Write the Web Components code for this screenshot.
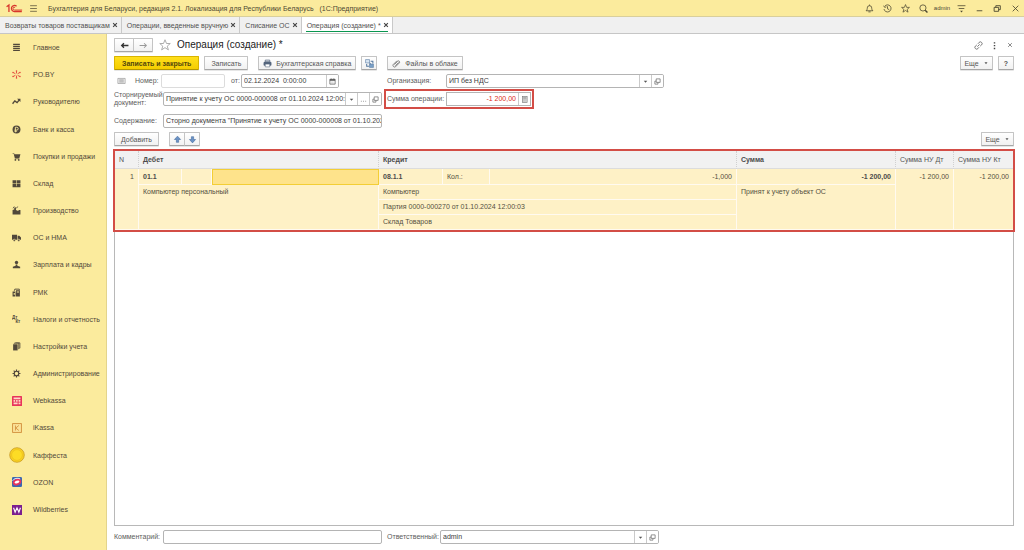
<!DOCTYPE html>
<html lang="ru">
<head>
<meta charset="utf-8">
<title>Операция (создание)</title>
<style>
html, body { margin: 0; height: 100%; }
body { font: 7px/9px "Liberation Sans", Arial, sans-serif; color: #444; background: #fff; }
</style>
</head>
<body>
<accounting-app></accounting-app>
<script>
const ICONS = {
  menu: '<path d="M2 3h12M2 8h12M2 13h12" stroke="#5d563c" stroke-width="1.4"/>',
  bell: '<path d="M2 12h12c-2-2-2-3-2-5a4 4 0 0 0-8 0c0 2 0 3-2 5zM6 14h4M8 1v2" fill="none" stroke="#4c4731" stroke-width="1.4"/>',
  history: '<path d="M3 4a6.3 6.3 0 1 1-1.200 5M1 3l2 3 3-1M8 4v4.500l3 1.500" fill="none" stroke="#4c4731" stroke-width="1.400"/>',
  star: '<path d="M8 1l2 5h5l-4 3.500 1.500 5L8 11.500 3.500 14.500 5 9.500 1 6h5z" fill="none" stroke="currentColor" stroke-width="1.300"/>',
  search: '<circle cx="7" cy="7" r="5.500" fill="none" stroke="#4c4731" stroke-width="1.400"/><path d="M11 11l4 4" stroke="#4c4731" stroke-width="2.400"/>',
  filter: '<path d="M1 3h14M3 8h10" stroke="#4c4731" stroke-width="1.400"/><path d="M5.500 12h5L8 15z" fill="#4c4731"/>',
  minimize: '<path d="M3 12h10" stroke="#4c4731" stroke-width="1.600"/>',
  restore: '<path d="M2 6h8v7H2zM5 6V3h8v7h-3" fill="none" stroke="#4c4731" stroke-width="1.600"/>',
  close: '<path d="M3 3l10 10M13 3L3 13" stroke="#4c4731" stroke-width="1.500"/>',
  tabclose: '<path d="M3 3l10 10M13 3L3 13" stroke="#444" stroke-width="3"/>',
  formclose: '<path d="M3 3l10 10M13 3L3 13" stroke="#666" stroke-width="2"/>',
  logo: '<g fill="none" stroke="#d8352c" stroke-width="2.200"><path d="M1 6l4-3v12"/><path d="M18 5a5.200 5.200 0 1 0-3 9h12"/><path d="M15.500 7a2.400 2.400 0 1 0-1 4.500h13" stroke-width="1.600"/></g>',
  main: '<path d="M2 2.500h12M2 6h12M2 9.500h12M2 13h12" stroke="#51483a" stroke-width="2"/>',
  snow: '<g stroke="#e2473b" stroke-width="1.600"><path d="M8 2v4M8 10v4M2 4.500l4 2M10 9.500l4 2M2 11.500l4-2M10 6.500l4-2"/></g><g fill="#e2473b"><circle cx="8" cy="1.800" r="1.300"/><circle cx="8" cy="14.200" r="1.300"/><circle cx="1.800" cy="4.500" r="1.300"/><circle cx="14.200" cy="4.500" r="1.300"/><circle cx="1.800" cy="11.500" r="1.300"/><circle cx="14.200" cy="11.500" r="1.300"/></g>',
  trend: '<path d="M1 12l4-5 4 3 4-5" fill="none" stroke="#51483a" stroke-width="2.400"/><path d="M9 3h6v6z" fill="#51483a"/>',
  bank: '<circle cx="8" cy="8" r="7" fill="#51483a"/><path d="M6 13V4h2.500a2.500 2.500 0 0 1 0 5H4.500M4.500 11H9" fill="none" stroke="#fbeb9d" stroke-width="1.600"/>',
  cart: '<path d="M1 2h3v2h11l-2 7H5L3 3H1z" fill="#51483a"/><path d="M5 12h8" stroke="#51483a"/><circle cx="6" cy="14" r="1.500" fill="#51483a"/><circle cx="12" cy="14" r="1.500" fill="#51483a"/>',
  store: '<path d="M1 2h6.500v5H1zM8.500 2H15v5H8.500zM1 8h6.500v5H1zM8.500 8H15v5H8.500zM1 13h14v1.500H1z" fill="#51483a"/>',
  factory: '<path d="M1 15V7l3-1V3l3-1v5l4 2 1-2h3v8z" fill="#51483a"/><path d="M2 4l2-3M8 4l2-3" stroke="#51483a" stroke-width="1.600"/>',
  truck: '<path d="M0 3h9v9H0zM10 5h3l3 3v4h-6z" fill="#51483a"/><circle cx="4" cy="13" r="2" fill="#51483a" stroke="#fbeb9d"/><circle cx="12" cy="13" r="2" fill="#51483a" stroke="#fbeb9d"/>',
  person: '<circle cx="8" cy="4.500" r="3" fill="#51483a"/><path d="M6.500 8h3v2l5 2v2.500h-13V12l5-2z" fill="#51483a"/>',
  pos: '<path d="M1 6h5v9H1zM7 4h7v11H7z" fill="#51483a"/><path d="M4 5l1-3h8v2" fill="none" stroke="#51483a" stroke-width="1.600"/><path d="M8.500 6h4v2h-4zM3 9h2v3H3z" fill="#fbeb9d"/>',
  books: '<path d="M2 4h8v11H2z" fill="#51483a"/><path d="M4 3V2h8v10h-1M6 1.500h8V11h-1" fill="none" stroke="#51483a" stroke-width="1.500"/>',
  gear: '<circle cx="8" cy="8" r="4" fill="none" stroke="#51483a" stroke-width="2"/><path d="M8 1v3M8 12v3M1 8h3M12 8h3M3 3l2 2M11 11l2 2M13 3l-2 2M5 11l-2 2" stroke="#51483a" stroke-width="2"/>',
  dtkt: '<text x="0" y="7" font-size="8" font-weight="bold" fill="#51483a">Дт</text><text x="6" y="15" font-size="8" font-weight="bold" fill="#51483a">Кт</text>',
  webkassa: '<rect width="16" height="16" rx="1" fill="#e8345a"/><path d="M2.500 2.500h11v2.500h-11zM2.500 6.500h2.500V9H2.500zM6.500 6.500H9V9H6.500zM10.500 6.500h3V9h-3zM2.500 10.500H9V13H2.500zM10.500 10.500h3V13h-3z" fill="#ffd9c4"/>',
  ikassa: '<rect x="1" y="1" width="14" height="14" fill="#fbe39a" stroke="#cf8a35" stroke-width="1.400"/><path d="M5.500 4v8M11 4L6 8l5 4" fill="none" stroke="#cf8a35" stroke-width="1.300"/>',
  coin: '<circle cx="8" cy="8" r="7.300" fill="#f9d223" stroke="#c2921e" stroke-width=".7"/><circle cx="8" cy="8" r="5.400" fill="#fddc25" stroke="#eab81c" stroke-width=".6"/>',
  ozon: '<rect width="16" height="16" rx="2" fill="#3c67b0"/><ellipse cx="8" cy="8" rx="5.500" ry="3.600" fill="#fff" stroke="#e8345a" stroke-width="3" transform="rotate(-20 8 8)"/><path d="M1 6c2-4 8-5 12-3" fill="none" stroke="#fff" stroke-width="1.400"/>',
  wb: '<rect width="16" height="16" fill="#7b1f8f"/><path d="M2.500 4.500L5 11.500l3-7 3 7 2.500-7" fill="none" stroke="#fff" stroke-width="1.800"/>',
  back: '<path d="M15 8H3M7 4L3 8l4 4" fill="none" stroke="#333" stroke-width="2.400"/>',
  forward: '<path d="M1 8h12M9 4l4 4-4 4" fill="none" stroke="#999" stroke-width="1.800"/>',
  printer: '<path d="M4 2h8v3H4z" fill="#fff" stroke="#54657d" stroke-width="1.400"/><rect x="1" y="5" width="14" height="7" rx="2" fill="#54657d"/><path d="M4 9h8v5H4z" fill="#fff" stroke="#54657d"/>',
  struct: '<path d="M1 1h7v6H1z" fill="#d9e6f3" stroke="#54779e"/><path d="M8 9h7v6H8z" fill="#7aa0c8" stroke="#54779e"/><path d="M10 4h4v4M3 9v4h4M8 7l2 2" fill="none" stroke="#54779e" stroke-width="1.800"/>',
  clip: '<path d="M4 10l6-6a2 2 0 0 1 3 3l-7 7a3 3 0 0 1-4-4l7-7M6 12l6-6" fill="none" stroke="#777" stroke-width="1.600"/>',
  list: '<path d="M1.500 2.500h13v9h-13z" fill="#eee" stroke="#888"/><path d="M4 5h8M4 7h8M4 9h8" stroke="#888"/>',
  calendar: '<path d="M2 3h12v11H2z" fill="#fff" stroke="#555" stroke-width="1.600"/><path d="M2 4.500h12" stroke="#555" stroke-width="3"/><path d="M5 9h6M5 11.500h6" stroke="#888" stroke-dasharray="1.500 1"/><path d="M5 1v3M11 1v3" stroke="#555" stroke-width="1.600"/>',
  calc: '<rect x="3" y="1" width="11" height="14" fill="#ddd" stroke="#777" stroke-width="1.400"/><path d="M5 4.500h7" stroke="#777" stroke-width="2"/><path d="M5 8.500h7M5 11.500h7" stroke="#777" stroke-dasharray="1.500 1"/>',
  down: '<path d="M4 6h8l-4 5z" fill="#555"/>',
  dots: '<path d="M2 12h2M7 12h2M12 12h2" stroke="#666" stroke-width="1.600"/>',
  open: '<path d="M5 2h9v8H5z" fill="none" stroke="#666" stroke-width="1.600"/><path d="M5 7H2v7h7v-4" fill="none" stroke="#666" stroke-width="1.600"/>',
  up: '<path d="M8 2l5.500 6H10v5H6V8H2.500z" fill="#6b93c6" stroke="#41689c"/>',
  dn: '<path d="M8 14l5.500-6H10V3H6v5H2.500z" fill="#6b93c6" stroke="#41689c"/>',
  link: '<path d="M6 10l4-4M7 5l2-2.500a3 3 0 0 1 4.500 4.500L11 9M9 11l-2 2.500A3 3 0 0 1 2.500 9L5 7" fill="none" stroke="#666" stroke-width="1.500"/>',
  more: '<path d="M8 2v2.500M8 7v2.500M8 12v2.500" stroke="#444" stroke-width="2.600"/>'
};

function define(name, css, html) {
  const template = document.createElement('template');
  customElements.define(name, class extends HTMLElement {
    connectedCallback() {
      if (this.shadowRoot) return;
      const root = this.attachShadow({ mode: 'open' });
      template.innerHTML = `<style>*{box-sizing:border-box}button{font:inherit;color:inherit;margin:0;cursor:pointer}${css}</style>` +
        (typeof html === 'function' ? html(this) : html);
      root.append(template.content.cloneNode(true));
    }
  });
}

define('ui-icon',
  ':host{display:inline-flex;flex:none;width:var(--icon,9px);height:var(--icon,9px)}svg{width:100%;height:100%;display:block}:host([name=logo]){width:17px;height:10px}',
  el => `<svg viewBox="${el.getAttribute('name') === 'logo' ? '0 0 29 16' : '0 0 16 16'}" aria-hidden="true">${ICONS[el.getAttribute('name')]}</svg>`);

define('ui-button', `
  :host{display:inline-flex;flex:none;height:14px}
  button{display:flex;align-items:center;justify-content:center;gap:4px;width:100%;height:100%;padding:0 6px;
    border:1px solid #c4c4c4;border-bottom-color:#a6a6a6;border-radius:1px;background:linear-gradient(#fff,#f1f1f1);color:#555;white-space:nowrap;box-shadow:0 1px 0 #e6e6e6}
  :host([primary]) button{padding:0 7px;background:linear-gradient(#ffdf1c,#f5cd00);border-color:#d9b400;border-bottom-color:#b59700;color:#54480c;font-weight:bold}
  :host([withicon]) button{padding:0 4px}
  :host([square]) button{padding:0}`,
  el => `<button type="button" aria-label="${el.getAttribute('label') || el.textContent.trim()}"><slot></slot></button>`);

define('icon-button', `
  :host{display:inline-flex;flex:none}
  button{display:flex;align-items:center;justify-content:center;width:100%;padding:0;border:0;background:none}`,
  el => `<button type="button" aria-label="${el.getAttribute('label')}"><ui-icon name="${el.getAttribute('icon')}"></ui-icon></button>`);

define('ui-field', `
  :host{display:flex;align-items:center;min-width:0;height:14px}
  label{flex:none;width:var(--label,auto);line-height:8px;color:#5c5c5c}
  .box{display:flex;flex:1;min-width:0;height:14px;border:1px solid #b4b4b4;border-radius:2px;background:#fff;overflow:hidden}
  :host([muted]) .box{border-color:#dcdcdc}
  input{flex:1;min-width:0;width:0;height:11px;padding:0 0 0 2px;border:0;outline:0;background:none;font:inherit;line-height:11px;color:#3c3c3c}
  :host([money]) input{padding-right:2px;text-align:right;color:#dc2a20}
  button{flex:none;display:flex;align-items:center;justify-content:center;width:12px;padding:0;border:0;border-left:1px solid #cacaca;background:#fff;--icon:7px}
  :host([marked]){outline:2px solid #d34d46;outline-offset:1px}
  :host([marked]) .box{border-radius:0}`,
  el => `<label for="f">${el.getAttribute('label')}</label><div class="box"><input id="f" type="text" value="${(el.getAttribute('value') || '').replace(/"/g, '&quot;')}">${
    (el.getAttribute('tools') || '').split(' ').filter(Boolean).map(t => `<button type="button" aria-label="${t}"><ui-icon name="${t}"></ui-icon></button>`).join('')}</div>`);

define('top-bar', `
  :host{display:flex;align-items:center;height:17px;padding:0 0 0 6px;background:#fbeb9d;border-bottom:1px solid #d9cf9c;color:#4d4833}
  .menu{margin-left:6px}h1{margin:0 auto 0 10px;font:inherit;white-space:pre}
  .tools{display:flex;align-items:center}.tools icon-button{width:18px}.user{width:20px;text-align:center;font-size:6px;color:inherit;text-decoration:none}`,
  `<ui-icon name="logo"></ui-icon><icon-button class="menu" icon="menu" label="Меню"></icon-button>
   <h1>Бухгалтерия для Беларуси, редакция 2.1. Локализация для Республики Беларусь   (1С:Предприятие)</h1>
   <div class="tools"><icon-button icon="bell" label="Уведомления"></icon-button><icon-button icon="history" label="История"></icon-button><icon-button icon="star" label="Избранное"></icon-button><icon-button icon="search" label="Поиск"></icon-button><a class="user" href="#">admin</a><icon-button icon="filter" label="Сервис"></icon-button><icon-button icon="minimize" label="Свернуть"></icon-button><icon-button icon="restore" label="Развернуть"></icon-button><icon-button icon="close" label="Закрыть"></icon-button></div>`);

define('window-tab', `
  :host{display:flex;align-items:center;gap:2px;height:16px;padding:0 3px 0 5px;border-right:1px solid #c9c9c9;color:#505050;--icon:6px}
  a{color:inherit;text-decoration:none;white-space:nowrap}
  :host([active]){background:linear-gradient(#0a9650,#0a9650) 50% 14px/calc(100% - 8px) 1px no-repeat #fff}`,
  `<a href="#"><slot></slot></a><icon-button icon="tabclose" label="Закрыть вкладку"></icon-button>`);

define('tab-strip', ':host{display:flex;height:17px;background:#f0f0f0;border-bottom:1px solid #c6c6c6}',
  `<window-tab>Возвраты товаров поставщикам</window-tab><window-tab>Операции, введенные вручную</window-tab><window-tab>Списание ОС</window-tab><window-tab active>Операция (создание) *</window-tab>`);

define('nav-item', `
  :host{display:flex;flex:1}
  a{display:flex;flex:1;align-items:center;color:#51483a;text-decoration:none;white-space:nowrap}
  .pic{display:flex;justify-content:center;width:33px;flex:none}
  :host([icon=coin]){--icon:16px}
  :host([icon=webkassa]),:host([icon=ikassa]),:host([icon=ozon]),:host([icon=wb]){--icon:10px}`,
  el => `<a href="#"><span class="pic"><ui-icon name="${el.getAttribute('icon')}"></ui-icon></span><slot></slot></a>`);

define('side-nav', ':host{display:flex;background:#fbeb9d;border-right:1px solid #e3d48c}nav{display:flex;flex:1;flex-direction:column;padding-bottom:27px}',
  '<nav>' + [['main','Главное'],['snow','PO.BY'],['trend','Руководителю'],['bank','Банк и касса'],['cart','Покупки и продажи'],['store','Склад'],['factory','Производство'],['truck','ОС и НМА'],['person','Зарплата и кадры'],['pos','РМК'],['dtkt','Налоги и отчетность'],['books','Настройки учета'],['gear','Администрирование'],['webkassa','Webkassa'],['ikassa','iKassa'],['coin','Каффеста'],['ozon','OZON'],['wb','Wildberries']]
    .map(([i, t]) => `<nav-item icon="${i}">${t}</nav-item>`).join('') + '</nav>');

define('entry-table', `
  :host{display:block;flex:1;min-height:0;border:1px solid #b8b8b8;background:#fff}
  table{width:100%;table-layout:fixed;border-collapse:separate;border-spacing:0;outline:2px solid #d34d46;background:#fef1c6}
  th,td{padding:0 4px;text-align:left;vertical-align:top;white-space:nowrap;font-weight:normal;overflow:hidden}
  th{background:#f1f1f1;color:#555;border-right:1px dotted #d0d0d0;border-bottom:1px solid #dcdcdc;line-height:17px}
  th.b,td.b{font-weight:bold;color:#4b4b4b}
  td{border-right:1px solid #fffaf0;border-bottom:1px solid #fffaf0;color:#54503f;line-height:14px}
  tr:first-child td{line-height:15px}
  th:last-child,td.last{border-right:0}
  .r{text-align:right}
  td.edit{background:#fee38b;border:1px solid #f3ce35}`,
  `<table><colgroup><col style="width:24px"><col style="width:43px"><col style="width:30px"><col style="width:167px"><col style="width:64px"><col style="width:47px"><col><col style="width:159px"><col style="width:58px"><col style="width:59px"></colgroup>
  <thead><tr><th>N</th><th class="b" colspan="3">Дебет</th><th class="b" colspan="3">Кредит</th><th class="b">Сумма</th><th>Сумма НУ Дт</th><th>Сумма НУ Кт</th></tr></thead>
  <tbody><tr><td class="r" rowspan="4">1</td><td class="b">01.1</td><td></td><td class="edit"></td><td class="b">08.1.1</td><td>Кол.:</td><td class="r">-1,000</td><td class="b r">-1 200,00</td><td class="r" rowspan="4">-1 200,00</td><td class="r last" rowspan="4">-1 200,00</td></tr>
  <tr><td colspan="3" rowspan="3">Компьютер персональный</td><td colspan="3">Компьютер</td><td rowspan="3">Принят к учету объект ОС</td></tr>
  <tr><td colspan="3">Партия 0000-000270 от 01.10.2024 12:00:03</td></tr>
  <tr><td colspan="3">Склад Товаров</td></tr></tbody></table>`);

define('operation-form', `
  :host{display:flex;flex-direction:column;gap:4px;min-width:0;padding:4px 10px 6px 7px;background:#fff}
  .row{display:flex;align-items:center;flex:none}
  .title{height:14px;margin-right:-4px}.title h2{margin:0 auto 0 4px;font:10px/14px "Liberation Sans",Arial,sans-serif;color:#222}
  .title .star{margin-left:4px;color:#aaa;--icon:12px}.title icon-button{width:16px}
  .pair ui-button{width:20px}.pair{display:flex}.pair ui-button+ui-button{margin-left:-1px}
  .commands{gap:5px}.push{margin-left:auto}
  .help{width:16px;font-weight:bold}.struct{width:16px;margin-right:5px}
  .fields{display:grid;grid-template-columns:268px 277px;column-gap:5px;row-gap:4px}
  .fields>*{--label:49px}.fields .right{--label:59px}
  .ident{display:flex;align-items:center}
  .ident ui-icon{margin:0 9px 0 3px}
  .number{width:90px;--label:26px}.date{width:108px;margin-left:6px;--label:10px}
  .tall{height:18px}.right.sum{width:144px}
  .foot{column-gap:5px}.foot .comment{width:268px;--label:49px}.foot .owner{width:272px;--label:53px}
  .add{width:45px;margin-right:10px}.more{width:33px;--icon:6px}.pair.move ui-button{width:16px}`,
  `<div class="row title"><div class="pair"><ui-button square label="Назад"><ui-icon name="back"></ui-icon></ui-button><ui-button square label="Вперед"><ui-icon name="forward"></ui-icon></ui-button></div>
     <icon-button class="star" icon="star" label="В избранное"></icon-button><h2>Операция (создание) *</h2>
     <icon-button icon="link" label="Ссылка"></icon-button><icon-button icon="more" label="Действия"></icon-button><icon-button style="--icon:6px" icon="formclose" label="Закрыть"></icon-button></div>
   <div class="row commands"><ui-button primary>Записать и закрыть</ui-button><ui-button>Записать</ui-button><span></span><ui-button withicon label="Бухгалтерская справка"><ui-icon name="printer"></ui-icon>Бухгалтерская справка</ui-button><ui-button class="struct" square label="Структура подчиненности"><ui-icon name="struct"></ui-icon></ui-button><ui-button withicon><ui-icon name="clip"></ui-icon>Файлы в облаке</ui-button><ui-button class="more push" square>Еще<ui-icon name="down"></ui-icon></ui-button><ui-button class="help" square>?</ui-button></div>
   <div class="fields">
     <div class="ident"><ui-icon name="list"></ui-icon><ui-field class="number" muted label="Номер:"></ui-field><ui-field class="date" label="от:" value="02.12.2024  0:00:00" tools="calendar"></ui-field></div>
     <ui-field class="right" label="Организация:" value="ИП без НДС" tools="down open"></ui-field>
     <div class="tall"><ui-field label="Сторнируемый документ:" value="Принятие к учету ОС 0000-000008 от 01.10.2024 12:00:04" tools="down dots open"></ui-field></div>
     <ui-field class="right sum" marked money label="Сумма операции:" value="-1 200,00" tools="calc"></ui-field>
     <ui-field label="Содержание:" value='Сторно документа "Принятие к учету ОС 0000-000008 от 01.10.2024 12:00:04"'></ui-field>
   </div>
   <div class="row"><ui-button class="add" square>Добавить</ui-button><div class="pair move"><ui-button square label="Вверх"><ui-icon name="up"></ui-icon></ui-button><ui-button square label="Вниз"><ui-icon name="dn"></ui-icon></ui-button></div><ui-button class="more push" square>Еще<ui-icon name="down"></ui-icon></ui-button></div>
   <entry-table></entry-table>
   <div class="row foot"><ui-field class="comment" label="Комментарий:"></ui-field><ui-field class="owner" label="Ответственный:" value="admin" tools="down open"></ui-field></div>`);

define('accounting-app', ':host{display:grid;grid-template:auto auto 1fr/107px minmax(0,1fr);min-height:100%}top-bar,tab-strip{grid-column:1/-1}',
  '<top-bar></top-bar><tab-strip></tab-strip><side-nav></side-nav><operation-form></operation-form>');
</script>
</body>
</html>
